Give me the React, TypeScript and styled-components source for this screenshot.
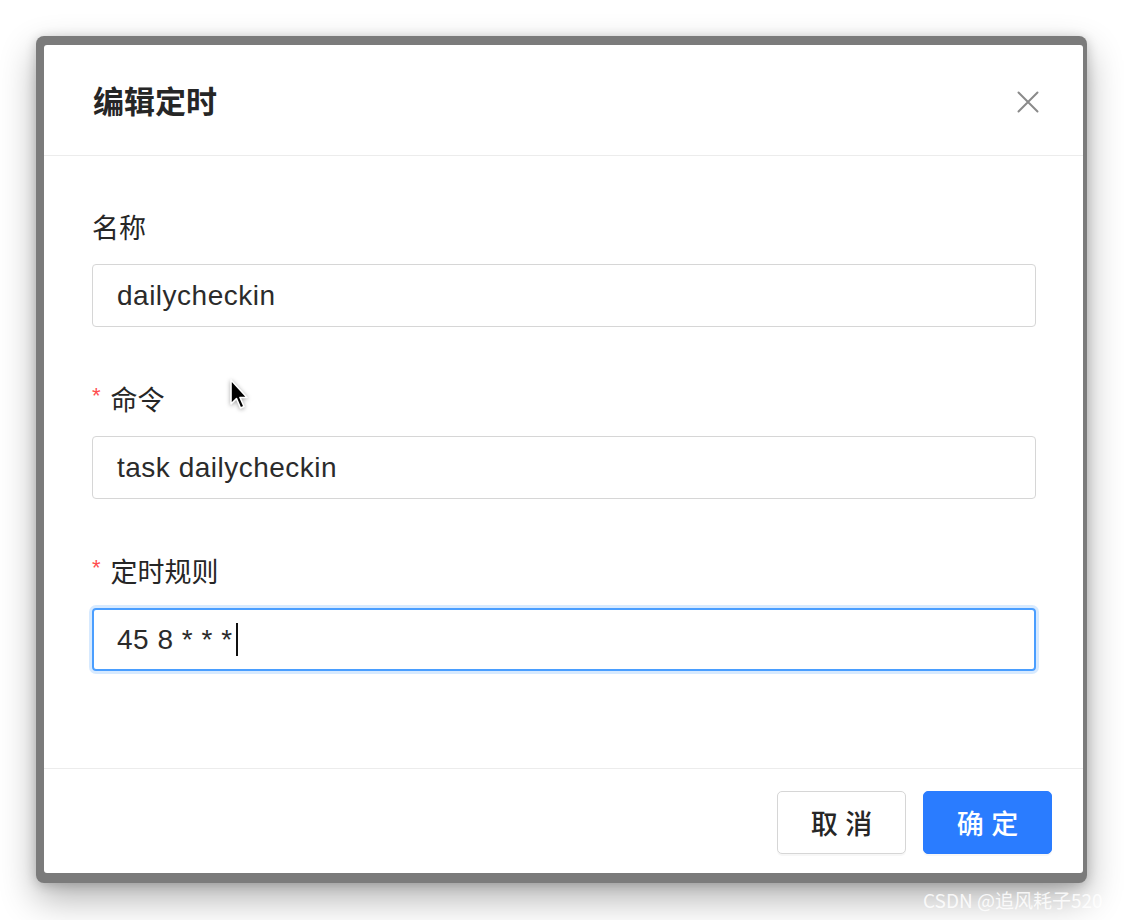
import React from "react";
import styled, { createGlobalStyle } from "styled-components";

const GlobalStyle = createGlobalStyle`
  html, body {
    margin: 0;
    padding: 0;
    background: #ffffff;
  }
  body {
    font-family: "Liberation Sans", "Noto Sans CJK SC", sans-serif;
    -webkit-font-smoothing: antialiased;
  }
  * { box-sizing: border-box; }
`;

const Page = styled.div`
  position: relative;
  width: 1124px;
  height: 920px;
  padding: 36px 0 0 36px;
  overflow: hidden;
  background: #ffffff;
`;

const WindowFrame = styled.div`
  width: 1051px;
  padding: 9px 4px 10px 8px;
  background: #7b7b7b;
  border-radius: 8px;
  box-shadow: 0 16px 36px rgba(0, 0, 0, 0.3), 0 2px 12px rgba(0, 0, 0, 0.2);
`;

const Modal = styled.div`
  display: flex;
  flex-direction: column;
  background: #ffffff;
  border-radius: 3px;
  height: 828px;
`;

const Header = styled.div`
  height: 111px;
  display: flex;
  align-items: center;
  justify-content: space-between;
  padding: 0 44px 0 49px;
  border-bottom: 1px solid #ececec;
`;

const Title = styled.div`
  font-family: "Noto Sans CJK SC", sans-serif;
  font-size: 31px;
  font-weight: 600;
  color: #262626;
  line-height: 44px;
`;

const CloseButton = styled.button`
  display: flex;
  align-items: center;
  justify-content: center;
  width: 22px;
  height: 22px;
  margin-top: 4px;
  padding: 0;
  border: none;
  background: transparent;
  cursor: pointer;
`;

const Body = styled.div`
  flex: 1;
  padding: 48px 47px 48px 48px;
  display: flex;
  flex-direction: column;
  gap: 49px;
`;

const FormItem = styled.div`
  display: flex;
  flex-direction: column;
  gap: 16px;
`;

const Label = styled.div`
  height: 44px;
  display: flex;
  align-items: center;
  font-family: "Noto Sans CJK SC", sans-serif;
  font-size: 27px;
  color: #262626;
`;

const Required = styled.span`
  font-family: "Liberation Sans", sans-serif;
  font-size: 22px;
  color: #ff4d4f;
  margin-right: 10px;
  margin-top: -4px;
`;

const InputBox = styled.div<{ $focused?: boolean }>`
  height: 63px;
  display: flex;
  align-items: center;
  border: ${(p) => (p.$focused ? "2px solid #4a9eff" : "1px solid #d6d6d6")};
  padding: 0 23px 0 ${(p) => (p.$focused ? "23px" : "24px")};
  border-radius: 4px;
  box-shadow: ${(p) => (p.$focused ? "0 0 0 3px rgba(74, 158, 255, 0.22)" : "none")};
  font-family: "Liberation Sans", sans-serif;
  font-size: 28px;
  letter-spacing: 0.5px;
  color: #2b2b2b;
  white-space: pre;
`;

const Caret = styled.span`
  display: inline-block;
  width: 2px;
  height: 33px;
  margin-left: 3px;
  background: #111111;
`;

const Footer = styled.div`
  height: 105px;
  border-top: 1px solid #ececec;
  display: flex;
  justify-content: flex-end;
  align-items: flex-start;
  gap: 17px;
  padding: 22px 31px 0 0;
`;

const Button = styled.button<{ $primary?: boolean }>`
  width: 129px;
  height: 63px;
  border-radius: 5px;
  border: 1px solid ${(p) => (p.$primary ? "#2a7cff" : "#d6d6d6")};
  background: ${(p) => (p.$primary ? "#2a7cff" : "#ffffff")};
  color: ${(p) => (p.$primary ? "#ffffff" : "#262626")};
  font-family: "Liberation Sans", "Noto Sans CJK SC", sans-serif;
  font-size: 27px;
  font-weight: 500;
  box-shadow: 0 2px 0 rgba(0, 0, 0, 0.03);
  cursor: pointer;
  white-space: pre;
`;

const Watermark = styled.div`
  position: absolute;
  left: 923px;
  top: 886px;
  font-family: "Noto Sans CJK SC", sans-serif;
  font-size: 19px;
  color: rgba(255, 255, 255, 0.85);
  white-space: nowrap;
`;

const Pointer = styled.svg`
  position: absolute;
  left: 229px;
  top: 378px;
  filter: drop-shadow(0 1px 2px rgba(0, 0, 0, 0.35));
`;

export default function App() {
  return (
    <>
      <GlobalStyle />
      <Page>
        <WindowFrame>
          <Modal>
            <Header>
              <Title>编辑定时</Title>
              <CloseButton aria-label="关闭">
                <svg width="22" height="22" viewBox="0 0 22 22">
                  <path d="M1.5 1.5 L20.5 20.5 M20.5 1.5 L1.5 20.5" stroke="#8a8a8a" strokeWidth="2" strokeLinecap="round" />
                </svg>
              </CloseButton>
            </Header>
            <Body>
              <FormItem>
                <Label>名称</Label>
                <InputBox>dailycheckin</InputBox>
              </FormItem>
              <FormItem>
                <Label>
                  <Required>*</Required>命令
                </Label>
                <InputBox>task dailycheckin</InputBox>
              </FormItem>
              <FormItem>
                <Label>
                  <Required>*</Required>定时规则
                </Label>
                <InputBox $focused>
                  {"45 8 * * *"}
                  <Caret />
                </InputBox>
              </FormItem>
            </Body>
            <Footer>
              <Button>取 消</Button>
              <Button $primary>确 定</Button>
            </Footer>
          </Modal>
        </WindowFrame>
        <Pointer width="20" height="34" viewBox="0 0 20 34">
          <path
            d="M2 2 L2 26 L7.5 20.5 L11.5 30 L15 28.5 L11 19.5 L18 19.5 Z"
            fill="#000000"
            stroke="#ffffff"
            strokeWidth="1.6"
            strokeLinejoin="round"
          />
        </Pointer>
        <Watermark>CSDN @追风耗子520</Watermark>
      </Page>
    </>
  );
}
